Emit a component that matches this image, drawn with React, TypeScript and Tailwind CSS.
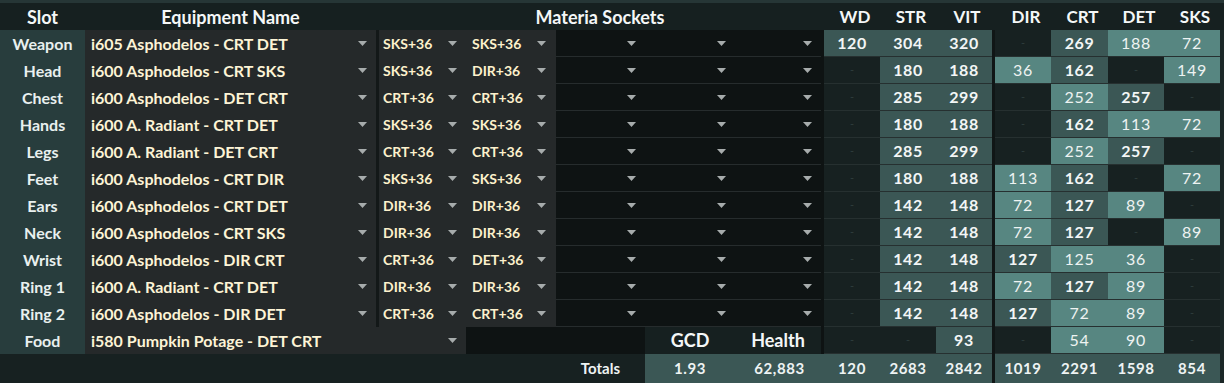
import React from "react";

type Cell = [string, "d" | "m" | "l"];

const rows: {
  slot: string;
  name: string;
  m1: string;
  m2: string;
  stats: Cell[];
}[] = [
  { slot: "Weapon", name: "i605 Asphodelos - CRT DET", m1: "SKS+36", m2: "SKS+36", stats: [["120", "m"], ["304", "m"], ["320", "m"], ["-", "d"], ["269", "m"], ["188", "l"], ["72", "l"]] },
  { slot: "Head", name: "i600 Asphodelos - CRT SKS", m1: "SKS+36", m2: "DIR+36", stats: [["-", "d"], ["180", "m"], ["188", "m"], ["36", "l"], ["162", "m"], ["-", "d"], ["149", "l"]] },
  { slot: "Chest", name: "i600 Asphodelos - DET CRT", m1: "CRT+36", m2: "CRT+36", stats: [["-", "d"], ["285", "m"], ["299", "m"], ["-", "d"], ["252", "l"], ["257", "m"], ["-", "d"]] },
  { slot: "Hands", name: "i600 A. Radiant - CRT DET", m1: "SKS+36", m2: "SKS+36", stats: [["-", "d"], ["180", "m"], ["188", "m"], ["-", "d"], ["162", "m"], ["113", "l"], ["72", "l"]] },
  { slot: "Legs", name: "i600 A. Radiant - DET CRT", m1: "CRT+36", m2: "CRT+36", stats: [["-", "d"], ["285", "m"], ["299", "m"], ["-", "d"], ["252", "l"], ["257", "m"], ["-", "d"]] },
  { slot: "Feet", name: "i600 Asphodelos - CRT DIR", m1: "SKS+36", m2: "SKS+36", stats: [["-", "d"], ["180", "m"], ["188", "m"], ["113", "l"], ["162", "m"], ["-", "d"], ["72", "l"]] },
  { slot: "Ears", name: "i600 Asphodelos - CRT DET", m1: "DIR+36", m2: "DIR+36", stats: [["-", "d"], ["142", "m"], ["148", "m"], ["72", "l"], ["127", "m"], ["89", "l"], ["-", "d"]] },
  { slot: "Neck", name: "i600 Asphodelos - CRT SKS", m1: "DIR+36", m2: "DIR+36", stats: [["-", "d"], ["142", "m"], ["148", "m"], ["72", "l"], ["127", "m"], ["-", "d"], ["89", "l"]] },
  { slot: "Wrist", name: "i600 Asphodelos - DIR CRT", m1: "CRT+36", m2: "DET+36", stats: [["-", "d"], ["142", "m"], ["148", "m"], ["127", "m"], ["125", "l"], ["36", "l"], ["-", "d"]] },
  { slot: "Ring 1", name: "i600 A. Radiant - CRT DET", m1: "DIR+36", m2: "DIR+36", stats: [["-", "d"], ["142", "m"], ["148", "m"], ["72", "l"], ["127", "m"], ["89", "l"], ["-", "d"]] },
  { slot: "Ring 2", name: "i600 Asphodelos - DIR DET", m1: "CRT+36", m2: "CRT+36", stats: [["-", "d"], ["142", "m"], ["148", "m"], ["127", "m"], ["72", "l"], ["89", "l"], ["-", "d"]] },
];

const food: Cell[] = [["-", "d"], ["-", "d"], ["93", "m"], ["-", "d"], ["54", "l"], ["90", "l"], ["-", "d"]];
const totals = ["120", "2683", "2842", "1019", "2291", "1598", "854"];
const statHeads = ["WD", "STR", "VIT", "DIR", "CRT", "DET", "SKS"];
const statW = ["w-[56px]", "w-[56px]", "w-[56px]", "w-[56px]", "w-[57px]", "w-[56px]", "w-[56px]"];

function Arrow() {
  return (
    <svg width="9" height="5" viewBox="0 0 9 5" className="shrink-0">
      <path d="M0 0h9L4.5 5z" fill="#a7acac" />
    </svg>
  );
}

function StatCell({ c, w }: { c: Cell; w: string }) {
  const [v, t] = c;
  if (t === "d")
    return (
      <div className={`${w} h-full flex items-center justify-center bg-[#172121] border-b border-[#263030] text-[#2f3d3d] text-[11px]`}>
        -
      </div>
    );
  if (t === "m")
    return (
      <div className={`${w} h-full flex items-center justify-center bg-[#3b5755] border-b border-[#263030] text-[#f3f6f6] font-bold text-[16px] tracking-[0.6px]`}>
        {v}
      </div>
    );
  return (
    <div className={`${w} h-full flex items-center justify-center bg-[#578681] border-b border-[#263030] text-[#eef3f2] text-[16px] tracking-[0.8px]`}>
      {v}
    </div>
  );
}

function Stats({ cells }: { cells: Cell[] }) {
  return (
    <div className="flex h-full">
      <div className="w-[3px] h-full bg-[#0e1313]" />
      {cells.slice(0, 3).map((c, i) => (
        <StatCell key={i} c={c} w={statW[i]} />
      ))}
      <div className="w-[3px] h-full bg-[#101616]" />
      {cells.slice(3).map((c, i) => (
        <StatCell key={i} c={c} w={statW[i + 3]} />
      ))}
    </div>
  );
}

function Empty({ w }: { w: string }) {
  return (
    <div className={`${w} h-full flex items-center justify-end pr-[9px] bg-[#0e1313] border-b border-[#262c2d]`}>
      <Arrow />
    </div>
  );
}

export default function App() {
  return (
    <div
      className="w-[1224px] h-[383px] bg-[#1b2727] text-[14px] overflow-hidden"
      style={{ fontFamily: "Lato, 'Liberation Sans', sans-serif" }}
    >
      <div className="h-[3px] bg-[#263636]" />
      {/* header */}
      <div className="flex h-[27px] bg-[#162020] text-[#f4f7f7] font-bold text-[18px] leading-none items-center">
        <div className="w-[85px] text-center">Slot</div>
        <div className="w-[291px] text-center">Equipment Name</div>
        <div className="w-[3px]" />
        <div className="w-[442px] text-center">Materia Sockets</div>
        <div className="w-[6px]" />
        {statHeads.map((h, i) => (
          <React.Fragment key={h}>
            {i === 3 && <div className="w-[3px]" />}
            <div className={`${statW[i]} text-center text-[17px]`}>{h}</div>
          </React.Fragment>
        ))}
      </div>

      {rows.map((r) => (
        <div key={r.slot} className="flex h-[27px] items-stretch">
          <div className="w-[85px] bg-[#283d3d] flex items-center justify-center font-bold text-[16px] text-[#e9f0ef]">
            {r.slot}
          </div>
          <div className="w-[291px] bg-[#25292a] flex items-center justify-between pl-[6px] pr-[9px] font-bold text-[16px] text-[#fdf4d6]">
            <span>{r.name}</span>
            <Arrow />
          </div>
          <div className="w-[3px] bg-[#131818]" />
          <div className="w-[87px] bg-[#25292a] flex items-center justify-between pl-[4px] pr-[9px] font-bold text-[#fdf1cc]">
            <span>{r.m1}</span>
            <Arrow />
          </div>
          <div className="w-[90px] bg-[#25292a] flex items-center justify-between pl-[6px] pr-[10px] font-bold text-[#fdf1cc]">
            <span>{r.m2}</span>
            <Arrow />
          </div>
          <Empty w="w-[89px]" />
          <Empty w="w-[90px]" />
          <Empty w="w-[86px]" />
          <Stats cells={r.stats} />
        </div>
      ))}

      {/* food */}
      <div className="flex h-[27px] items-stretch">
        <div className="w-[85px] bg-[#283d3d] flex items-center justify-center font-bold text-[16px] text-[#e9f0ef]">Food</div>
        <div className="w-[381px] bg-[#25292a] flex items-center justify-between pl-[6px] pr-[9px] font-bold text-[16px] text-[#fdf4d6]">
          <span>i580 Pumpkin Potage - DET CRT</span>
          <Arrow />
        </div>
        <div className="w-[179px] bg-[#0e1313]" />
        <div className="w-[90px] bg-[#162020] flex items-center justify-center font-bold text-[18px] text-[#f4f7f7]">GCD</div>
        <div className="w-[86px] bg-[#162020] flex items-center justify-center font-bold text-[18px] text-[#f4f7f7]">Health</div>
        <Stats cells={food} />
      </div>

      {/* totals */}
      <div className="flex h-[29px] items-stretch font-bold text-[15px] tracking-[0.6px] text-[#eef3f3]">
        <div className="w-[645px] bg-[#172121] flex items-center justify-end pr-[25px] tracking-normal">Totals</div>
        <div className="w-[90px] bg-[#3b5755] flex items-center justify-center">1.93</div>
        <div className="w-[89px] bg-[#3b5755] flex items-center justify-center">62,883</div>
        {totals.map((t, i) => (
          <React.Fragment key={i}>
            {i === 3 && <div className="w-[3px] bg-[#101616]" />}
            <div className={`${statW[i]} bg-[#3b5755] flex items-center justify-center`}>{t}</div>
          </React.Fragment>
        ))}
      </div>
    </div>
  );
}
